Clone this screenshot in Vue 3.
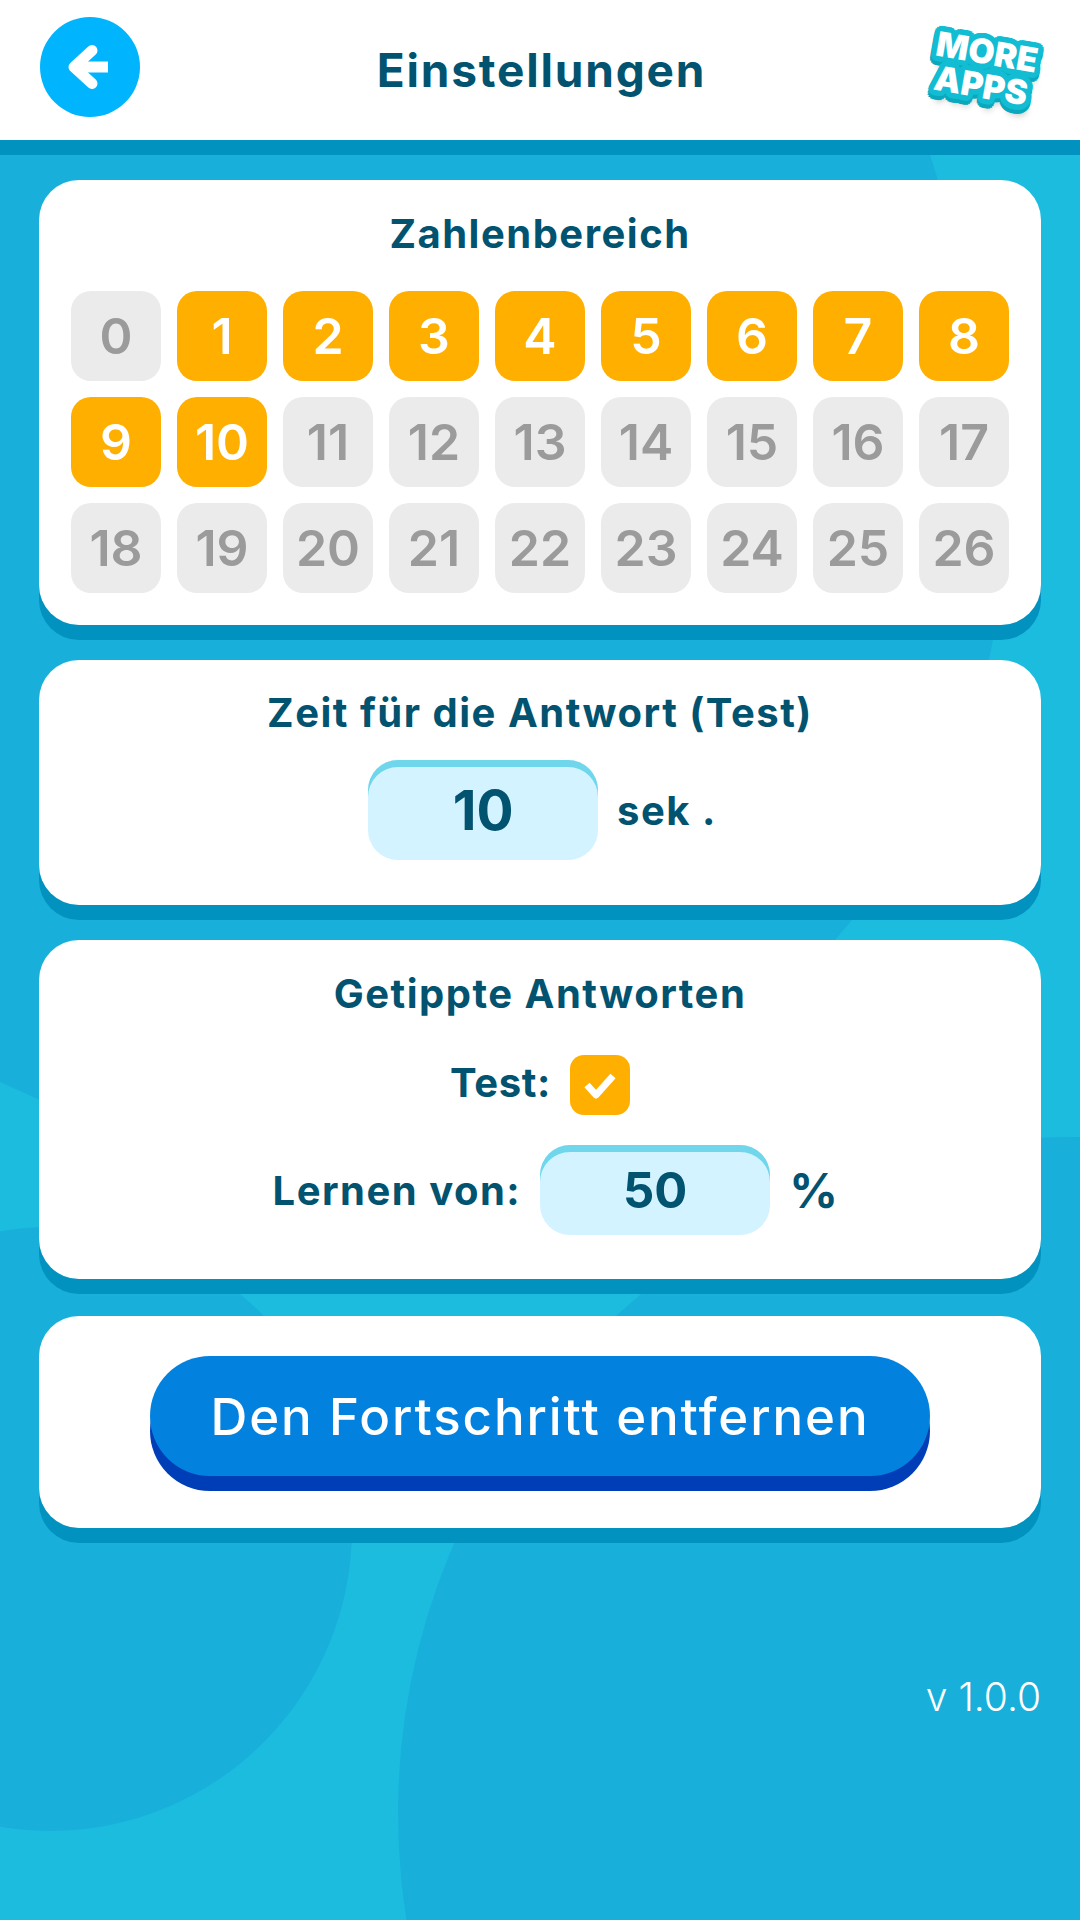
<template>
  <div class="page">
    <svg class="bg" width="1080" height="1200" viewBox="0 0 1080 1200">
      <path d="M0 0 H900 L930 155 L938 180 C965 300 998 540 993 640 L989 660 C975 745 925 845 852 920 L835 940 L40 1100 L0 1082 Z" fill="#18b0da" />
    </svg>
    <div class="blob blob-left"></div>
    <div class="blob blob-right"></div>

    <header class="header">
      <button class="back">
        <svg width="44" height="44" viewBox="0 0 44 44">
          <path d="M24 5.5 L6 22 L24 38.500" fill="none" stroke="#fff" stroke-width="11" stroke-linecap="round" stroke-linejoin="round" />
          <path d="M10 22 H40" fill="none" stroke="#fff" stroke-width="11" />
        </svg>
      </button>
      <h1>Einstellungen</h1>
      <div class="more" :style="{ textShadow: moreShadow }">
        <span>MORE</span>
        <span>APPS</span>
      </div>
    </header>

    <main class="content">
      <section class="card card-range">
        <h2>Zahlenbereich</h2>
        <div class="grid">
          <div v-for="n in numbers" :key="n" class="num" :class="{ on: n >= 1 && n <= 10 }">{{ n }}</div>
        </div>
      </section>

      <section class="card card-time">
        <h2>Zeit für die Antwort (Test)</h2>
        <div class="row">
          <div class="field field-time">10</div>
          <span class="label">sek .</span>
        </div>
      </section>

      <section class="card card-typed">
        <h2>Getippte Antworten</h2>
        <div class="row row-test">
          <span class="label">Test:</span>
          <div class="check">
            <svg width="36" height="30" viewBox="0 0 36 30">
              <path d="M5 15 L14 25 L31 6" fill="none" stroke="#fff" stroke-width="7" stroke-linejoin="round" />
            </svg>
          </div>
        </div>
        <div class="row row-learn">
          <span class="label">Lernen von:</span>
          <div class="field field-learn">50</div>
          <span class="label percent">%</span>
        </div>
      </section>

      <section class="card card-reset">
        <button class="reset">Den Fortschritt entfernen</button>
      </section>

      <div class="version">v 1.0.0</div>
    </main>
  </div>
</template>

<script setup>
const numbers = Array.from({ length: 27 }, (_, i) => i)

// round outline for the logo: rings of text shadows, light one over dark one
const ring = (r, dy, color) =>
  Array.from({ length: 16 }, (_, i) => {
    const a = (i / 16) * Math.PI * 2
    return `${(Math.cos(a) * r).toFixed(1)}px ${(Math.sin(a) * r + dy).toFixed(1)}px 0 ${color}`
  })

const moreShadow = [
  ...ring(5.5, 0, '#12bcd2'),
  ...ring(5.5, 4, '#0aa8bc'),
  '3px 11px 6px rgba(0, 0, 0, 0.22)'
].join(', ')
</script>

<style>
html,
body {
  margin: 0;
}
</style>

<style scoped>
.page {
  position: relative;
  width: 1080px;
  height: 1920px;
  overflow: hidden;
  background: #1cbcdf;
  font-family: Inter, "Noto Sans", sans-serif;
  color: #02536f;
}

.bg {
  position: absolute;
  left: 0;
  top: 0;
}

.blob {
  position: absolute;
  border-radius: 50%;
  background: #18b0da;
}

.blob-left {
  left: -252px;
  top: 1227px;
  width: 604px;
  height: 604px;
}

.blob-right {
  left: 398px;
  top: 1137px;
  width: 1352px;
  height: 1352px;
}

.header {
  position: relative;
  height: 140px;
  background: #fff;
  border-bottom: 15px solid #0292c0;
  display: grid;
  grid-template-columns: 1fr auto 1fr;
  align-items: center;
  padding: 0 37px 0 40px;
}

.back {
  width: 100px;
  height: 100px;
  margin-top: -6px;
  padding: 0;
  border: none;
  border-radius: 50%;
  background: #00b4fd;
  display: flex;
  align-items: center;
  justify-content: center;
}

h1 {
  margin: 0;
  font-size: 46px;
  font-weight: 700;
  letter-spacing: 1.8px;
}

.more {
  justify-self: end;
  width: 118px;
  height: 86px;
  margin-top: -2px;
  display: flex;
  flex-direction: column;
  align-items: center;
  justify-content: center;
  transform: rotate(10deg);
  font-size: 34px;
  line-height: 34px;
  font-weight: 900;
  color: #fff;
}

.more span {
  position: relative;
}

.content {
  position: relative;
  padding: 25px 39px 0;
  display: flex;
  flex-direction: column;
  gap: 35px;
}

.card {
  box-sizing: border-box;
  background: #fff;
  border-radius: 40px;
  box-shadow: 0 15px 0 #0292c0;
  display: flex;
  flex-direction: column;
  align-items: center;
}

h2 {
  margin: 0;
  font-size: 40px;
  line-height: 46px;
  font-weight: 700;
  letter-spacing: 1.5px;
}

.card-range {
  height: 445px;
  padding-top: 31px;
}

.grid {
  margin-top: 34px;
  display: grid;
  grid-template-columns: repeat(9, 90px);
  grid-auto-rows: 90px;
  gap: 16px;
}

.num {
  border-radius: 20px;
  background: #ebebeb;
  color: #9b9b9b;
  font-size: 50px;
  font-weight: 600;
  display: flex;
  align-items: center;
  justify-content: center;
}

.num.on {
  background: #ffaf00;
  color: #fff;
}

.row {
  display: flex;
  align-items: center;
}

.card-time {
  height: 245px;
  padding-top: 30px;
}

.card-time .row {
  margin-top: 24px;
  padding-left: 5px;
  gap: 19px;
}

.field {
  box-sizing: border-box;
  background: #d2f3ff;
  box-shadow: inset 0 7px 0 #70d6ec;
  font-weight: 700;
  display: flex;
  align-items: center;
  justify-content: center;
}

.field-time {
  width: 230px;
  height: 100px;
  border-radius: 30px;
  font-size: 55px;
}

.label {
  font-size: 40px;
  font-weight: 700;
  letter-spacing: 1.5px;
}

.card-typed {
  height: 339px;
  padding-top: 31px;
}

.row-test {
  margin-top: 38px;
  gap: 19px;
}

.row-test .label {
  margin-top: -6px;
  letter-spacing: 0.6px;
}

.check {
  width: 60px;
  height: 60px;
  border-radius: 14px;
  background: #ffaf00;
  display: flex;
  align-items: center;
  justify-content: center;
}

.row-learn {
  margin-top: 30px;
  padding-left: 32px;
  gap: 19px;
}

.field-learn {
  width: 230px;
  height: 90px;
  border-radius: 30px;
  font-size: 49px;
}

.percent {
  font-size: 48px;
}

.card-reset {
  height: 212px;
  margin-top: 2px;
  padding-top: 40px;
}

.reset {
  width: 780px;
  height: 120px;
  padding: 0;
  border: none;
  border-radius: 60px;
  background: #0282de;
  box-shadow: 0 15px 0 #003eb8;
  color: #fff;
  font-family: inherit;
  font-size: 51px;
  font-weight: 500;
  letter-spacing: 1.9px;
}

.version {
  margin-top: 110px;
  align-self: flex-end;
  color: #fff;
  font-size: 39px;
  line-height: 48px;
  font-weight: 300;
}
</style>
